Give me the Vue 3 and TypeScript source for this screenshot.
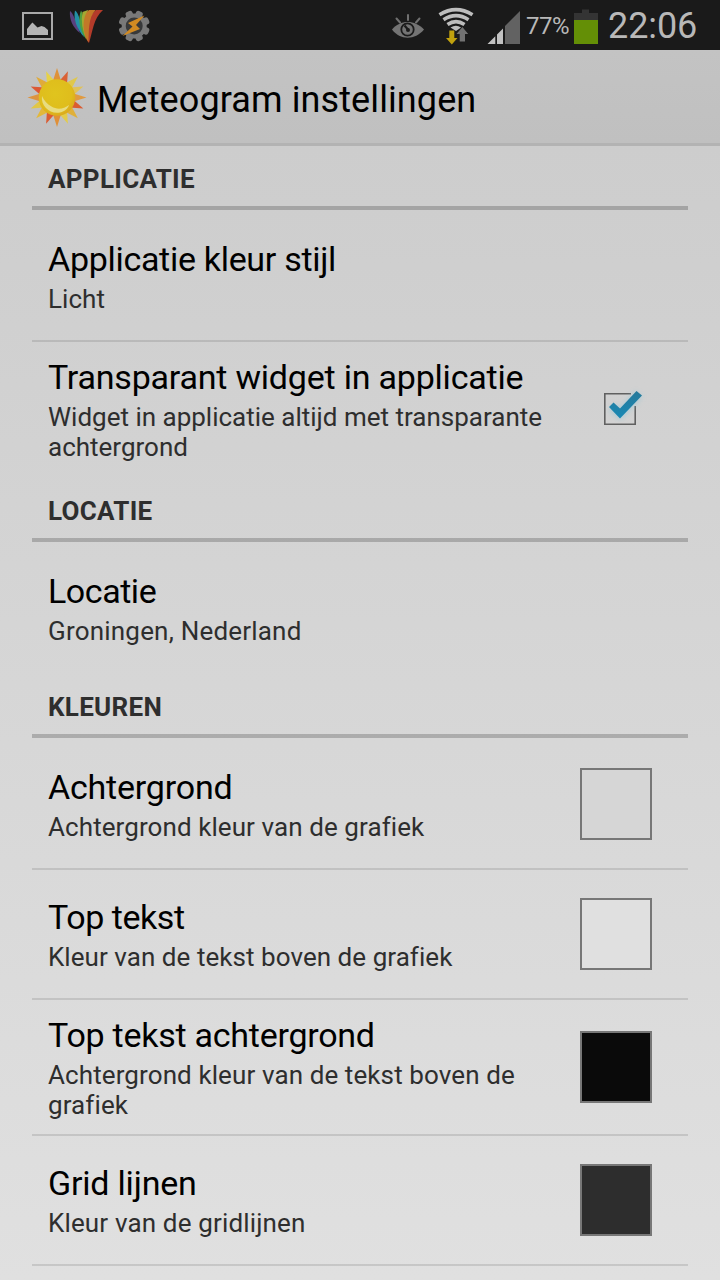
<script setup lang="ts">
interface Preference {
  title: string
  summary: string[]
  tracking?: [number, number]
  checked?: boolean
  swatch?: 'panel' | 'light' | 'black' | 'dark'
}
interface Section {
  name: string
  items: Preference[]
}

const sections: Section[] = [
  {
    name: 'APPLICATIE',
    items: [
      { title: 'Applicatie kleur stijl', summary: ['Licht'], tracking: [-0.3, 0.05] },
      {
        title: 'Transparant widget in applicatie',
        summary: ['Widget in applicatie altijd met transparante', 'achtergrond'],
        tracking: [-0.21, 0],
        checked: true,
      },
    ],
  },
  { name: 'LOCATIE', items: [{ title: 'Locatie', summary: ['Groningen, Nederland'], tracking: [-0.45, 0.2] }] },
  {
    name: 'KLEUREN',
    items: [
      { title: 'Achtergrond', summary: ['Achtergrond kleur van de grafiek'], tracking: [-0.2, 0.08], swatch: 'panel' },
      { title: 'Top tekst', summary: ['Kleur van de tekst boven de grafiek'], tracking: [-0.45, 0.05], swatch: 'light' },
      {
        title: 'Top tekst achtergrond',
        summary: ['Achtergrond kleur van de tekst boven de', 'grafiek'],
        tracking: [-0.25, 0.1],
        swatch: 'black',
      },
      { title: 'Grid lijnen', summary: ['Kleur van de gridlijnen'], tracking: [-0.2, 0.15], swatch: 'dark' },
    ],
  },
]

const rayColors = ['#df9238', '#da6135', '#e0c84c', '#e0c25a', '#e09a40', '#da5c32', '#e0b03a', '#e3cb4a', '#e09038', '#da5c32', '#e3b83a', '#e0c648', '#dd9440', '#dc5835', '#e0ab3a', '#e6d248']
const rays = rayColors.map((color, i) => {
  const a = (i * Math.PI) / 8
  const tip = i % 2 ? 28.5 : 29.5
  const at = (r: number, t: number) => `${(30 + r * Math.sin(t)).toFixed(2)},${(29.5 - r * Math.cos(t)).toFixed(2)}`
  return { color, points: `${at(15.5, a - 0.3)} ${at(tip, a)} ${at(15.5, a + 0.3)}` }
})
const teeth = [0, 45, 90, 135, 180, 225, 270, 315]
</script>

<template>
  <div class="screen">
    <div class="status">
      <svg class="notifications" width="160" height="50" viewBox="0 0 160 50">
        <rect x="23" y="13" width="29" height="26" fill="none" stroke="#a9a9a9" stroke-width="2" />
        <path d="M27 35v-6l4-5 1.500-1.500 5 5 4-1.500 3 1 3.500 3V35z" fill="#b4b4b4" />
        <g>
          <path d="M70 11C73 13 76 21 80 33C73 28 69 19 70 11z" fill="#59407f" />
          <path d="M75 10.500C79 13 81 24 84 37C77 29 73 19 75 10.500z" fill="#238fa6" />
          <path d="M81 10.500C84 15 84 28 86 39C79 30 78 18 81 10.500z" fill="#4f9f3f" />
          <path d="M88 10Q84 24 86.500 40Q80 25 82.500 12z" fill="#a3a832" />
          <path d="M103 10C93 19 93 31 89 43C82 35 86 18 96 10z" fill="#b33b2a" />
          <path d="M95.500 10C88 18 89 31 88.500 42C81 32 83 14 89 10z" fill="#c27828" />
        </g>
        <g fill="#797979">
          <rect v-for="t in teeth" :key="t" x="130.600" y="10.300" width="7.200" height="8" rx="2.500" :transform="`rotate(${t + 22.500} 134.200 26)`" />
          <circle cx="134.200" cy="26" r="12.500" />
          <circle cx="134.200" cy="26" r="8.500" fill="#38393a" />
          <path d="M144.500 15.500L128 23L132.500 26.500L122.500 36L140 29L136 25z" fill="#d18a22" />
        </g>
      </svg>
      <div class="system">
        <svg width="132" height="50" viewBox="390 0 132 50">
          <g stroke="#707070" stroke-width="2" stroke-linecap="round" fill="none">
            <path d="M408 15v5M396.500 18.500l3.500 4M419.500 18.500l-3.500 4" />
          </g>
          <path d="M392 29.500C400 19.500 415 19.500 424 29.500C415 40.500 400 40.500 392 29.500z" fill="#747474" />
          <circle cx="407.500" cy="29.500" r="6.200" fill="none" stroke="#1a1a1a" stroke-width="1.800" />
          <path d="M404.500 25.500l3.500 4" stroke="#1a1a1a" stroke-width="2.200" />
          <circle cx="408" cy="30" r="2" fill="#1a1a1a" />
          <g fill="none" stroke="#bdbdbd" stroke-width="3.600">
            <path d="M439.500 14.800Q456 4.500 472.500 14.800" />
            <path d="M443.500 19.800Q456 11.600 468.500 19.800" />
            <path d="M447.500 24.600Q456 18.800 464.500 24.600" />
          </g>
          <path d="M450.500 27.600Q456 23.800 461 27.600L456 31z" fill="#bdbdbd" />
          <path d="M449.300 30.500h5V38h3.200l-5.700 6.500l-5.800-6.500h3.300z" fill="#c0a10e" />
          <path d="M459.700 41.500V34h-3.200l5.900-7l5.800 7h-3.200v7.500z" fill="#727272" />
          <path d="M487.500 44l7.800-7.800V44zM497 44V34.500l6-6V44z" fill="#c2c2c2" />
          <path d="M505 44V26l15-15v33z" fill="#626262" />
        </svg>
        <span class="percent">77%</span>
        <svg class="battery" width="24" height="50" viewBox="0 0 24 50">
          <path d="M0 20v-7h8V9.500h7V13h9v7z" fill="#343434" />
          <rect y="20" width="24" height="24" fill="#648f06" />
        </svg>
        <span class="clock">22:06</span>
      </div>
    </div>

    <header class="bar">
      <svg width="60" height="60" viewBox="0 0 60 60">
        <defs>
          <radialGradient id="sunDisc" cx="45%" cy="40%" r="60%">
            <stop offset="0" stop-color="#e0c41e" />
            <stop offset=".75" stop-color="#dfbd1c" />
            <stop offset="1" stop-color="#dcaa1c" />
          </radialGradient>
          <filter id="soft"><feGaussianBlur stdDeviation=".6" /></filter>
        </defs>
        <polygon v-for="(r, i) in rays" :key="i" :points="r.points" :fill="r.color" />
        <circle cx="30" cy="29.500" r="18.300" fill="url(#sunDisc)" />
        <path d="M15 28C13.500 38 23 46.500 33 44.500C38 43.500 41 40 42 37C37 41 30 42 24.500 38.500C20 36 17 32.500 15 28z" fill="#e8dc80" filter="url(#soft)" />
      </svg>
      <h1>Meteogram instellingen</h1>
    </header>

    <main>
      <section v-for="s in sections" :key="s.name">
        <h2>{{ s.name }}</h2>
        <div v-for="(p, i) in s.items" :key="p.title" class="row" :class="{ first: i === 0, last: i === s.items.length - 1 && s.name !== 'KLEUREN' }">
          <div class="text">
            <div class="title" :style="{ letterSpacing: `${p.tracking?.[0] ?? 0}px` }">{{ p.title }}</div>
            <div v-for="line in p.summary" :key="line" class="summary" :style="{ letterSpacing: `${p.tracking?.[1] ?? 0}px` }">{{ line }}</div>
          </div>
          <svg v-if="p.checked" class="check" width="56" height="56" viewBox="0 0 56 56">
            <defs>
              <linearGradient id="tick" x1="0" y1="0" x2="0" y2="1">
                <stop offset="0" stop-color="#27799a" />
                <stop offset="1" stop-color="#1789b5" />
              </linearGradient>
              <filter id="glow" x="-40%" y="-40%" width="180%" height="180%"><feGaussianBlur stdDeviation="2.500" /></filter>
            </defs>
            <path d="M39 12.800H12.800v30.400h30.400V25" fill="none" stroke="#606060" stroke-width="1.600" />
            <path d="M20 26l8 7L47 13" fill="none" stroke="#8fc6d8" stroke-width="9" opacity=".55" filter="url(#glow)" />
            <path d="M17 26l4.500-4.500l6.500 6L44.500 10l5.500 4.500L28 37.500z" fill="url(#tick)" />
          </svg>
          <span v-if="p.swatch" class="swatch" :class="p.swatch"></span>
        </div>
      </section>
    </main>
  </div>
</template>

<style>
body { background: #e0e0e0; overflow: hidden; }
</style>
<style scoped>
.screen {
  width: 720px;
  height: 1280px;
  overflow: hidden;
  display: flex;
  flex-direction: column;
  font-family: Roboto, sans-serif;
  color: #000;
}
.status {
  height: 50px;
  flex: none;
  display: flex;
  justify-content: space-between;
  background: #1a1a1a;
  color: #b8b8b8;
}
.system { display: flex; padding-right: 22px; }
.system svg { flex: none; }
.percent { width: 46px; padding-left: 4px; font-size: 24px; line-height: 52px; letter-spacing: -.5px; white-space: nowrap; }
.battery { margin-left: 2px; }
.clock { width: 90px; padding-left: 10px; font-size: 36px; line-height: 52px; letter-spacing: -.1px; white-space: nowrap; }
.bar {
  box-sizing: border-box;
  height: 96px;
  flex: none;
  display: flex;
  align-items: center;
  padding: 2px 0 0 27px;
  border-bottom: 3px solid #b3b3b3;
  background: linear-gradient(#c3c3c3, #c0c0c0);
}
h1 { margin: 5px 0 0 10px; font-size: 36px; line-height: 42px; font-weight: 400; letter-spacing: .1px; white-space: nowrap; }
main {
  flex: 1;
  min-height: 0;
  padding: 0 32px;
  background: linear-gradient(#cdcdcd, #e0e0e0);
}
h2 {
  box-sizing: border-box;
  height: 64px;
  margin: 0;
  padding: 18px 16px 0;
  border-bottom: 4px solid rgba(0, 0, 0, .2);
  font-size: 26px;
  line-height: 30px;
  font-weight: 700;
  letter-spacing: .3px;
  color: #2e2e2e;
}
.row {
  box-sizing: border-box;
  min-height: 130px;
  display: flex;
  align-items: center;
  padding: 0 36px 0 16px;
  border-bottom: 2px solid rgba(0, 0, 0, .11);
}
.row.first { min-height: 132px; padding-top: 2px; }
.row.last { border-bottom-color: transparent; }
.text { flex: 1; padding: 15px 0 14px; white-space: nowrap; }
.title { font-size: 34px; line-height: 40px; margin-bottom: 5px; }
.summary { font-size: 26px; line-height: 30px; color: #2e2e2e; }
.check { margin-right: 4px; }
.swatch { box-sizing: border-box; width: 72px; height: 72px; border: 2px solid #777; }
.swatch.panel { background: #d6d6d6; }
.swatch.light { background: #e0e0e0; }
.swatch.black { background: #0a0a0a; }
.swatch.dark { background: #2d2d2d; }
</style>
